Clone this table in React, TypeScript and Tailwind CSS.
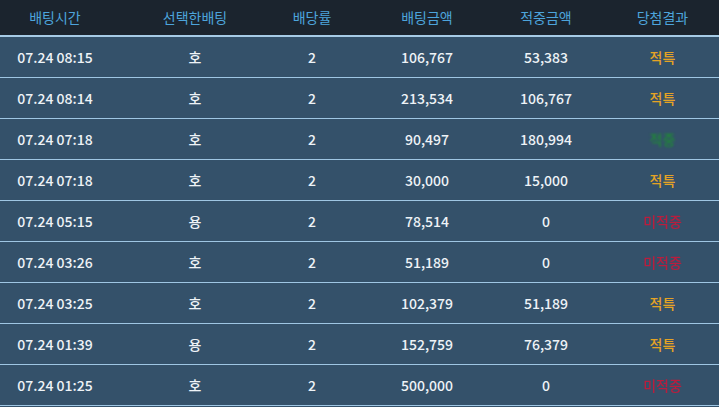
const rows = [
  { time: "07.24 08:15", pick: "호", odds: "2", bet: "106,767", win: "53,383", result: "적특" },
  { time: "07.24 08:14", pick: "호", odds: "2", bet: "213,534", win: "106,767", result: "적특" },
  { time: "07.24 07:18", pick: "호", odds: "2", bet: "90,497", win: "180,994", result: "적중" },
  { time: "07.24 07:18", pick: "호", odds: "2", bet: "30,000", win: "15,000", result: "적특" },
  { time: "07.24 05:15", pick: "용", odds: "2", bet: "78,514", win: "0", result: "미적중" },
  { time: "07.24 03:26", pick: "호", odds: "2", bet: "51,189", win: "0", result: "미적중" },
  { time: "07.24 03:25", pick: "호", odds: "2", bet: "102,379", win: "51,189", result: "적특" },
  { time: "07.24 01:39", pick: "용", odds: "2", bet: "152,759", win: "76,379", result: "적특" },
  { time: "07.24 01:25", pick: "호", odds: "2", bet: "500,000", win: "0", result: "미적중" },
];

const headers = ["배팅시간", "선택한배팅", "배당률", "배팅금액", "적중금액", "당첨결과"];

const grid = "grid grid-cols-[134px_122px_112px_118px_120px_113px] items-center text-center";

function resultClass(r: string) {
  if (r === "적특") return "text-[#e5a325]";
  if (r === "적중") return "text-[#1f8a35] blur-[1.2px]";
  return "text-[#b81e3e] blur-[0.6px]";
}

export default function App() {
  return (
    <div className="h-[407px] w-[719px] overflow-hidden bg-[#34516a] text-[14px] font-['Noto_Sans_CJK_KR','Noto_Sans',sans-serif]">
      <div className={`${grid} h-[37px] border-b-2 border-[#a6cbe6] bg-[#1b242e] text-[#4da4dc]`}>
        {headers.map((h, i) => (
          <div key={h} className={i === 0 ? "pr-6" : ""}>{h}</div>
        ))}
      </div>
      {rows.map((r, i) => (
        <div key={i} className={`${grid} h-[41px] border-b border-[#9fc6e3] font-medium text-[#eef3f7]`}>
          <div className="pr-6">{r.time}</div>
          <div>{r.pick}</div>
          <div>{r.odds}</div>
          <div>{r.bet}</div>
          <div>{r.win}</div>
          <div className={resultClass(r.result)}>{r.result}</div>
        </div>
      ))}
    </div>
  );
}
